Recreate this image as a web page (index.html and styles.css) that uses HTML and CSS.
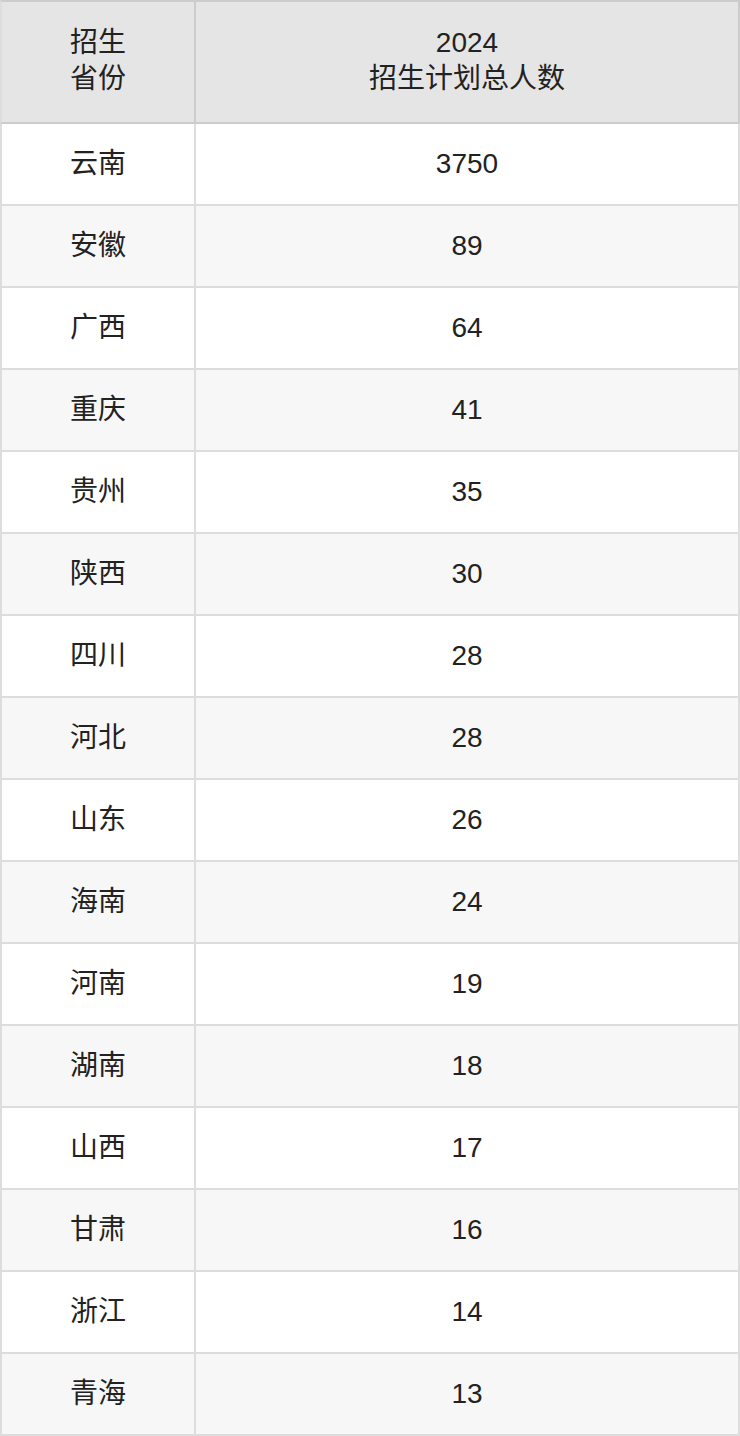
FILE: index.html
```html
<!DOCTYPE html>
<html lang="zh-CN">
<head>
<meta charset="utf-8">
<title>招生计划</title>
<link rel="stylesheet" href="styles.css">
</head>
<body>
<table class="plan">
  <thead>
    <tr>
      <th class="col-prov">招生<br>省份</th>
      <th class="col-num">2024<br>招生计划总人数</th>
    </tr>
  </thead>
  <tbody>
    <tr><td>云南</td><td>3750</td></tr>
    <tr><td>安徽</td><td>89</td></tr>
    <tr><td>广西</td><td>64</td></tr>
    <tr><td>重庆</td><td>41</td></tr>
    <tr><td>贵州</td><td>35</td></tr>
    <tr><td>陕西</td><td>30</td></tr>
    <tr><td>四川</td><td>28</td></tr>
    <tr><td>河北</td><td>28</td></tr>
    <tr><td>山东</td><td>26</td></tr>
    <tr><td>海南</td><td>24</td></tr>
    <tr><td>河南</td><td>19</td></tr>
    <tr><td>湖南</td><td>18</td></tr>
    <tr><td>山西</td><td>17</td></tr>
    <tr><td>甘肃</td><td>16</td></tr>
    <tr><td>浙江</td><td>14</td></tr>
    <tr><td>青海</td><td>13</td></tr>
  </tbody>
</table>
</body>
</html>
```
FILE: styles.css
```css
html, body {
  margin: 0;
  padding: 0;
  background: #ffffff;
}

.plan {
  width: 740px;
  border-collapse: separate;
  border-spacing: 0;
  table-layout: fixed;
  font-family: "Liberation Sans", "Noto Sans CJK SC", sans-serif;
  font-size: 28px;
  color: #222222;
}

.plan th,
.plan td {
  box-sizing: border-box;
  text-align: center;
  vertical-align: middle;
  padding: 0;
  font-weight: normal;
  border-right: 2px solid #dddddd;
  border-bottom: 2px solid #dddddd;
}

.plan th:first-child,
.plan td:first-child {
  border-left: 2px solid #dddddd;
}

.plan .col-prov {
  width: 196px;
}

.plan .col-num {
  width: 544px;
}

.plan thead th {
  background: #e5e5e5;
  height: 124px;
  line-height: 36px;
  padding-bottom: 2px;
  border-top: 2px solid #cccccc;
  border-bottom-color: #cccccc;
  border-right-color: #cccccc;
  border-left-color: #cccccc;
}

.plan tbody td {
  height: 82px;
  line-height: 36px;
}

.plan tbody tr:nth-child(even) td {
  background: #f7f7f7;
}
```
